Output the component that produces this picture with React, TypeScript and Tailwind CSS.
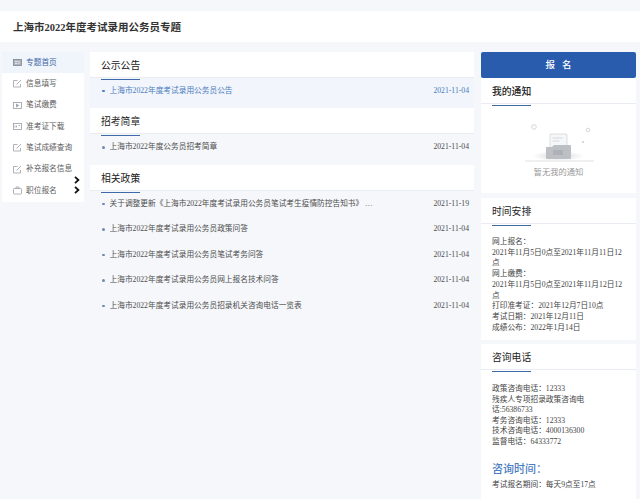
const F = "font-['Liberation_Serif','Noto_Sans_CJK_SC',serif]";

function IconFrame({ kind }: { kind: string }) {
  const c = kind === "home" ? "#7d8590" : "#9a9fa6";
  return (
    <svg width="9" height="9" viewBox="0 0 9 9" fill="none" stroke={c} strokeWidth="0.8" className="shrink-0">
      {kind === "home" && (
        <>
          <rect x="0.5" y="1.500" width="8" height="6" fill="#aeb3ba" />
          <path d="M2 3.500h2.500M2 5.500h2.500" stroke="#eef0f3" />
          <path d="M6 3v3" stroke="#eef0f3" />
        </>
      )}
      {kind === "edit" && (
        <>
          <path d="M7.500 5v3h-7V1.500h4" />
          <path d="M3.500 5.500 8 1" />
        </>
      )}
      {kind === "pay" && (
        <>
          <rect x="0.5" y="1.500" width="8" height="6" />
          <path d="M3.500 3v3l2-1.500z" fill={c} />
        </>
      )}
      {kind === "card" && (
        <>
          <rect x="0.5" y="1.500" width="8" height="6" />
          <path d="M2 3.500v2M3.500 3.500v2M5.500 3.500h1.500" />
        </>
      )}
      {kind === "bag" && (
        <>
          <rect x="0.5" y="2.500" width="8" height="5.500" rx="0.8" />
          <path d="M3 2.500V1h3v1.500" />
        </>
      )}
    </svg>
  );
}

function Chevron({ className }: { className: string }) {
  return (
    <svg width="6" height="8" viewBox="0 0 6 8" fill="none" stroke="#111" strokeWidth="1.8" className={className}>
      <path d="M1 .8 4.400 4 1 7.200" />
    </svg>
  );
}

const menu = [
  { t: "专题首页", k: "home" },
  { t: "信息填写", k: "edit" },
  { t: "笔试缴费", k: "pay" },
  { t: "准考证下载", k: "card" },
  { t: "笔试成绩查询", k: "edit" },
  { t: "补充报名信息", k: "edit" },
  { t: "职位报名", k: "bag" },
];

function SectionTitle({ title, strong }: { title: string; strong?: boolean }) {
  return (
    <div className="bg-white border-b border-[#e9ecf2] h-[26px] pl-[11px]">
      <div
        className={`inline-block h-[26px] border-b-[1.5px] border-[#3f6aa8] leading-[24px] text-[9.8px] text-[#222] ${
          strong ? "font-medium" : ""
        }`}
      >
        {title}
      </div>
    </div>
  );
}

function Row({ title, date, blue }: { title: string; date: string; blue?: boolean }) {
  return (
    <div className={`flex items-center h-[25.5px] pl-[12px] pr-[5px] text-[7.7px] ${blue ? "text-[#4a7cc0]" : "text-[#4d4d4d]"}`}>
      <span className={`w-[2.5px] h-[2.5px] rounded-full mr-[5px] shrink-0 ${blue ? "bg-[#4a7cc0]" : "bg-[#6f89ad]"}`} />
      <span className="flex-1 truncate">{title}</span>
      <span className="shrink-0">{date}</span>
    </div>
  );
}

export default function App() {
  return (
    <div className={`w-[640px] h-[499px] overflow-hidden bg-[#f5f7fb] pt-[11px] ${F}`}>
      <div className="h-[31px] bg-white pl-[13px] leading-[33px] text-[10.5px] font-semibold text-[#333]">
        上海市2022年度考试录用公务员专题
      </div>
      <div className="flex mt-[10px] pl-[2px] pr-[4px]">
        <div className="w-[82px] h-[150px] bg-white relative">
          {menu.map((m, i) => (
            <div
              key={m.t}
              className={`flex items-center h-[21.3px] pl-[11px] gap-[4px] text-[7.7px] ${
                i === 0 ? "bg-[#f0f4fb] text-[#3d66a8]" : "text-[#5c5c5c]"
              }`}
            >
              <IconFrame kind={m.k} />
              <span>{m.t}</span>
            </div>
          ))}
          <Chevron className="absolute left-[72px] top-[124px]" />
          <Chevron className="absolute left-[72px] top-[134px]" />
        </div>

        <div className="w-[384px] ml-[6px]">
          <SectionTitle title="公示公告" />
          <div className="h-[30px] bg-[#f2f5fb]">
            <Row title="上海市2022年度考试录用公务员公告" date="2021-11-04" blue />
          </div>
          <SectionTitle title="招考简章" />
          <div className="h-[31px] pt-[0.5px]">
            <Row title="上海市2022年度公务员招考简章" date="2021-11-04" />
          </div>
          <SectionTitle title="相关政策" />
          <Row title="关于调整更新《上海市2022年度考试录用公务员笔试考生疫情防控告知书》 …" date="2021-11-19" />
          <Row title="上海市2022年度考试录用公务员政策问答" date="2021-11-04" />
          <Row title="上海市2022年度考试录用公务员笔试考务问答" date="2021-11-04" />
          <Row title="上海市2022年度考试录用公务员网上报名技术问答" date="2021-11-04" />
          <Row title="上海市2022年度考试录用公务员招录机关咨询电话一览表" date="2021-11-04" />
        </div>

        <div className="w-[155px] ml-[7px]">
          <div className="h-[26px] rounded-[2px] bg-[#2a5cae] text-white text-[9.5px] font-medium flex items-center justify-center gap-[7px]">
            <span>报</span>
            <span>名</span>
          </div>
          <div className="bg-white h-[115px]">
            <SectionTitle title="我的通知" strong />
            <svg width="155" height="62" viewBox="0 0 155 62" fill="none" className="block mt-[2px]">
              <defs>
                <radialGradient id="s">
                  <stop offset="0" stopColor="#d4d6d9" />
                  <stop offset="1" stopColor="#ffffff" />
                </radialGradient>
              </defs>
              <circle cx="53" cy="21" r="2.300" stroke="#c9ccd1" strokeWidth="0.8" />
              <circle cx="107" cy="24" r="1.800" stroke="#c9ccd1" strokeWidth="0.8" />
              <circle cx="102" cy="36" r="1" fill="#c9ccd1" />
              <ellipse cx="77" cy="50" rx="26" ry="5" fill="url(#s)" />
              <rect x="69" y="28" width="17" height="16" rx="1" fill="#f6f7f8" stroke="#c6c9cd" strokeWidth="0.6" />
              <path d="M71.500 32h10M71.500 35h7" stroke="#c6c9cd" strokeWidth="0.7" />
              <path d="M65 41h6l2 -2h16a1 1 0 0 1 1 1v12a1 1 0 0 1 -1 1h-23a1 1 0 0 1 -1 -1z" fill="#bcc0c4" />
              <rect x="72" y="44" width="10" height="5" fill="#aeb2b7" />
              <path d="M44 55h69" stroke="#c9ccd1" strokeWidth="0.6" />
            </svg>
            <div className="text-center text-[8.300px] leading-[11px] text-[#9a9a9a] mt-[-1.500px]">暂无我的通知</div>
          </div>
          <div className="bg-white mt-[5px] h-[142px]">
            <SectionTitle title="时间安排" />
            <div className="px-[11px] pt-[13px] text-[7.7px] leading-[10.700px] text-[#444]">
              <div>网上报名：</div>
              <div>2021年11月5日0点至2021年11月11日12点</div>
              <div>网上缴费：</div>
              <div>2021年11月5日0点至2021年11月12日12点</div>
              <div>打印准考证：2021年12月7日10点</div>
              <div>考试日期：2021年12月11日</div>
              <div>成绩公布：2022年1月14日</div>
            </div>
          </div>
          <div className="bg-white mt-[4px] h-[160px]">
            <SectionTitle title="咨询电话" />
            <div className="pl-[11px] pt-[14px] text-[7.7px] leading-[10.600px] text-[#444]">
              <div>政策咨询电话：12333</div>
              <div className="w-[97px]">残疾人专项招录政策咨询电话:56386733</div>
              <div>考务咨询电话：12333</div>
              <div>技术咨询电话：4000136300</div>
              <div>监督电话：64333772</div>
              <div className="text-[11px] leading-[14px] text-[#4a7cc0] mt-[14px] font-medium">咨询时间：</div>
              <div className="mt-[4px]">考试报名期间：每天9点至17点</div>
            </div>
          </div>
        </div>
      </div>
    </div>
  );
}
